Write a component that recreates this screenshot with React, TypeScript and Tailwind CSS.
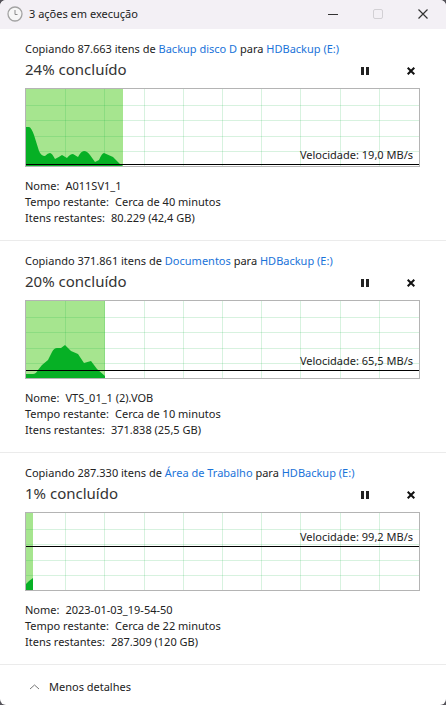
import React from "react";

type Job = {
  items: string;
  source: string;
  target: string;
  percent: number;
  fill: number;
  curve: string;
  lineY: number;
  speed: string;
  name: string;
  time: string;
  left: string;
};

const jobs: Job[] = [
  {
    items: "87.663",
    source: "Backup disco D",
    target: "HDBackup (E:)",
    percent: 24,
    fill: 97,
    curve:
      "M0 77V38H3Q5 38 8 46L13 62Q15 67 19 67Q22 64 24 64Q26 64 29 70Q33 68 36 66L41 69Q44 65 47 65L52 68Q55 62 58 62Q61 62 64 66L69 73L73 71Q76 64 78 64L87 68L94 75L97 77Z",
    lineY: 75,
    speed: "19,0 MB/s",
    name: "A011SV1_1",
    time: "Cerca de 40 minutos",
    left: "80.229 (42,4 GB)",
  },
  {
    items: "371.861",
    source: "Documentos",
    target: "HDBackup (E:)",
    percent: 20,
    fill: 79,
    curve:
      "M0 77V73H7Q10 73 12 69L16 64L22 59L26 51Q28 47 31 47L35 47L39 44L45 50L52 53L58 62L65 60L71 68L79 75V77Z",
    lineY: 69,
    speed: "65,5 MB/s",
    name: "VTS_01_1 (2).VOB",
    time: "Cerca de 10 minutos",
    left: "371.838 (25,5 GB)",
  },
  {
    items: "287.330",
    source: "Área de Trabalho",
    target: "HDBackup (E:)",
    percent: 1,
    fill: 7,
    curve: "M0 77V71L3 68L7 65V77Z",
    lineY: 33,
    speed: "99,2 MB/s",
    name: "2023-01-03_19-54-50",
    time: "Cerca de 22 minutos",
    left: "287.309 (120 GB)",
  },
];

const columns = [39, 78, 118, 157, 196, 235, 274, 314, 353];
const rows = [16, 31, 47, 62];

function SpeedChart({ job }: { job: Job }) {
  return (
    <div className="relative mt-[7px] h-[79px] border border-[#b4b4b4] bg-white">
      <svg
        className="block h-full w-full"
        viewBox="0 0 393 77"
        preserveAspectRatio="none"
        shapeRendering="crispEdges"
        aria-hidden="true"
      >
        <rect width={job.fill} height="77" fill="#a6e58f" />
        {columns.map((x) => (
          <rect key={x} x={x} width="1" height="77" fill="#06b035" fillOpacity="0.16" />
        ))}
        {rows.map((y) => (
          <rect key={y} y={y} width="393" height="1" fill="#06b035" fillOpacity="0.16" />
        ))}
        <path d={job.curve} fill="#06b025" shapeRendering="auto" />
        <rect y={job.lineY} width="393" height="1" fill="#000000" />
      </svg>
      <span
        className="absolute right-1.5 -translate-y-full text-[11px] leading-4 whitespace-pre"
        style={{ top: job.lineY - 1 }}
      >
        Velocidade: {job.speed}
      </span>
    </div>
  );
}

function JobPanel({ job }: { job: Job }) {
  return (
    <section className="border-b border-[#ebebeb] pt-3 pr-[26px] pb-[14px] pl-[25px]">
      <p className="text-[11px] leading-4">
        Copiando {job.items} itens de{" "}
        <a href="#" className="text-[#1a73d9]">{job.source}</a> para{" "}
        <a href="#" className="text-[#1a73d9]">{job.target}</a>
      </p>
      <div className="flex h-6 justify-between">
        <h2 className="text-[15px] leading-6 text-[#333333]">{job.percent}% concluído</h2>
        <div className="flex items-end gap-[30px] pr-px">
          <button type="button" aria-label="Pausar" className="flex h-5 w-4 items-center justify-center">
            <svg width="8" height="8" viewBox="0 0 8 8" fill="#222222">
              <path d="M0 0h3v8H0zM5 0h3v8H5z" />
            </svg>
          </button>
          <button type="button" aria-label="Cancelar" className="flex h-5 w-4 items-center justify-center">
            <svg width="8" height="8" viewBox="0 0 8 8" stroke="#111111" strokeWidth="2">
              <path d="M.7.7l6.6 6.6M7.3.7L.7 7.3" />
            </svg>
          </button>
        </div>
      </div>
      <SpeedChart job={job} />
      <dl className="mt-[11px] text-[11px] leading-4">
        <div className="flex gap-1.5"><dt>Nome:</dt><dd>{job.name}</dd></div>
        <div className="flex gap-1.5"><dt>Tempo restante:</dt><dd>{job.time}</dd></div>
        <div className="flex gap-1.5"><dt>Itens restantes:</dt><dd>{job.left}</dd></div>
      </dl>
    </section>
  );
}

export default function App() {
  return (
    <div className="min-h-screen bg-[#55535a] font-['Noto_Sans','Open_Sans',sans-serif] text-[#222222]">
      <main className="min-h-screen overflow-hidden rounded-md bg-white">
        <header className="flex h-[29px] items-center bg-[#f3f0f5] pb-0.5 pl-[7px]">
          <svg width="16" height="16" viewBox="0 0 16 16" fill="none" aria-hidden="true">
            <circle cx="8" cy="8" r="7" fill="#f7f7f7" stroke="#a3a3a3" strokeWidth="1.3" />
            <path d="M8 4V8.5H10.5" stroke="#8b8b8b" />
          </svg>
          <h1 className="ml-1.5 grow text-[11px] leading-4">3 ações em execução</h1>
          <button type="button" aria-label="Minimizar" className="flex h-7 w-[45px] items-center justify-center">
            <svg width="10" height="10" viewBox="0 0 10 10"><path d="M0 5.5h10" stroke="#333333" /></svg>
          </button>
          <button type="button" aria-label="Maximizar" disabled className="flex h-7 w-[45px] items-center justify-center">
            <svg width="10" height="10" viewBox="0 0 10 10" fill="none">
              <rect x=".5" y=".5" width="9" height="9" rx="1.5" stroke="#d2d0d4" />
            </svg>
          </button>
          <button type="button" aria-label="Fechar" className="flex h-7 w-[46px] items-center justify-center">
            <svg width="10" height="10" viewBox="0 0 10 10"><path d="M.5.5l9 9M9.5.5l-9 9" stroke="#333333" strokeWidth="1.2" /></svg>
          </button>
        </header>
        {jobs.map((job) => (
          <JobPanel key={job.name} job={job} />
        ))}
        <footer className="flex h-10 items-center px-7">
          <button type="button" className="flex items-center gap-2 pt-1 text-[11px] leading-4">
            <svg width="13" height="8" viewBox="0 0 13 8" fill="none" aria-hidden="true">
              <path d="M2 6L6.5 2L11 6" stroke="#777777" />
            </svg>
            Menos detalhes
          </button>
        </footer>
      </main>
    </div>
  );
}
